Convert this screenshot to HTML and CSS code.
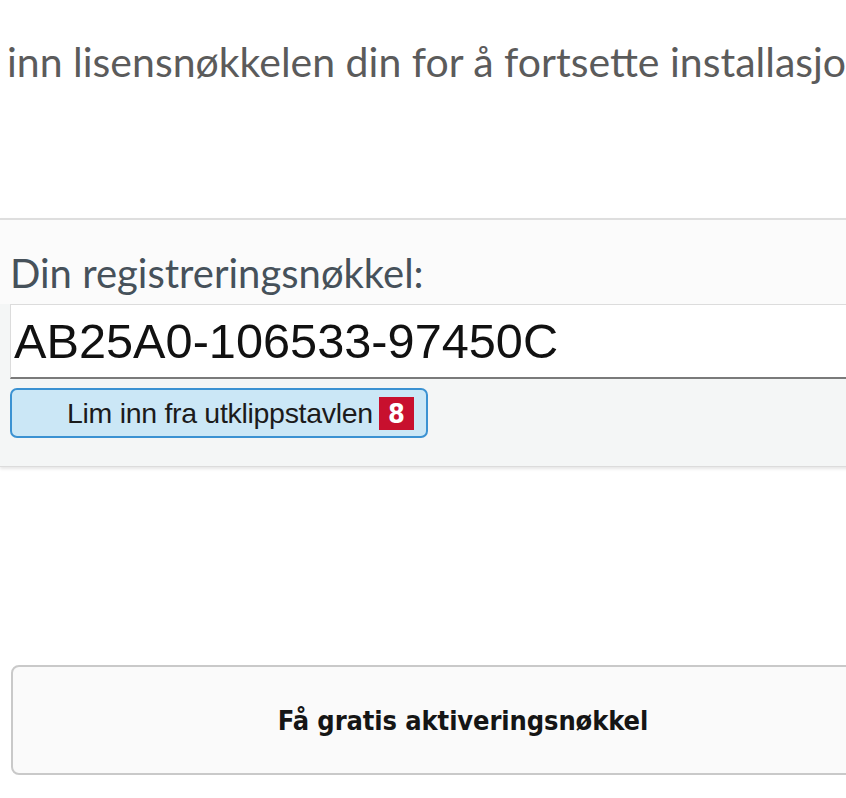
FILE: index.html
```html
<!DOCTYPE html>
<html lang="no">
<head>
<meta charset="utf-8">
<title>Lisensnøkkel</title>
<link rel="stylesheet" href="styles.css">
</head>
<body>
<div class="page">
  <h1 class="title">inn lisensnøkkelen din for å fortsette installasjonen.</h1>
  <section class="panel">
    <div class="panel-head">
      <label class="key-label" for="key">Din registreringsnøkkel:</label>
    </div>
    <div class="key-input" id="key">AB25A0-106533-97450C</div>
    <div class="panel-body">
      <button class="paste" type="button">Lim inn fra utklippstavlen <span class="badge">8</span></button>
    </div>
  </section>
  <div class="actions">
    <button class="free" type="button">Få gratis aktiveringsnøkkel</button>
  </div>
</div>
</body>
</html>
```
FILE: styles.css
```css
html, body {
  margin: 0;
  padding: 0;
  background: #ffffff;
  overflow: hidden;
}
.page {
  width: 930px;
  display: flex;
  flex-direction: column;
}
.title {
  margin: 37px 0 0 7px;
  font-family: "Lato", "Open Sans", sans-serif;
  font-weight: 400;
  font-size: 41px;
  line-height: 50px;
  color: #5b5b5b;
  white-space: nowrap;
}
.panel {
  margin-top: 131px;
  border-top: 2px solid #dedede;
  border-bottom: 1px solid #dcdcdc;
  box-shadow: 0 2px 3px rgba(0, 0, 0, 0.10);
  background: #f4f6f6;
}
.panel-head {
  background: #fbfbfb;
  padding: 29px 0 7px 10px;
}
.key-label {
  display: block;
  font-family: "Lato", "Open Sans", sans-serif;
  font-size: 40px;
  line-height: 48px;
  color: #46515a;
}
.key-input {
  margin-left: 10px;
  height: 72px;
  box-sizing: content-box;
  background: #ffffff;
  border-top: 1px solid #dcdcdc;
  border-left: 1px solid #dcdcdc;
  border-bottom: 2px solid #7a7a7a;
  padding-left: 3px;
  font-family: "Liberation Sans", Arial, sans-serif;
  font-size: 48.7px;
  line-height: 72px;
  color: #111111;
}
.panel-body {
  padding: 9px 0 28px 10px;
}
.paste {
  display: flex;
  align-items: center;
  width: 418px;
  height: 50px;
  padding: 0 0 0 55px;
  box-sizing: border-box;
  background: #cbe7f6;
  border: 2px solid #3b92d2;
  border-radius: 7px;
  font-family: "Liberation Sans", Arial, sans-serif;
  font-size: 28.5px;
  color: #1b1b1b;
  gap: 6px;
  letter-spacing: -0.3px;
}
.badge {
  display: inline-flex;
  align-items: center;
  justify-content: center;
  width: 35px;
  height: 33px;
  background: #c8102e;
  color: #ffffff;
  font-family: "DejaVu Sans Condensed", "DejaVu Sans", sans-serif;
  font-weight: 700;
  font-size: 27px;
  letter-spacing: 0;
}
.actions {
  padding: 198px 0 0 11px;
}
.free {
  width: 904px;
  height: 110px;
  box-sizing: border-box;
  background: #fafafa;
  border: 2px solid #c9c9c9;
  border-radius: 8px;
  font-family: "DejaVu Sans Condensed", "DejaVu Sans", sans-serif;
  font-stretch: condensed;
  font-weight: 700;
  font-size: 27px;
  letter-spacing: -0.1px;
  color: #151515;
  padding: 0;
}
```
